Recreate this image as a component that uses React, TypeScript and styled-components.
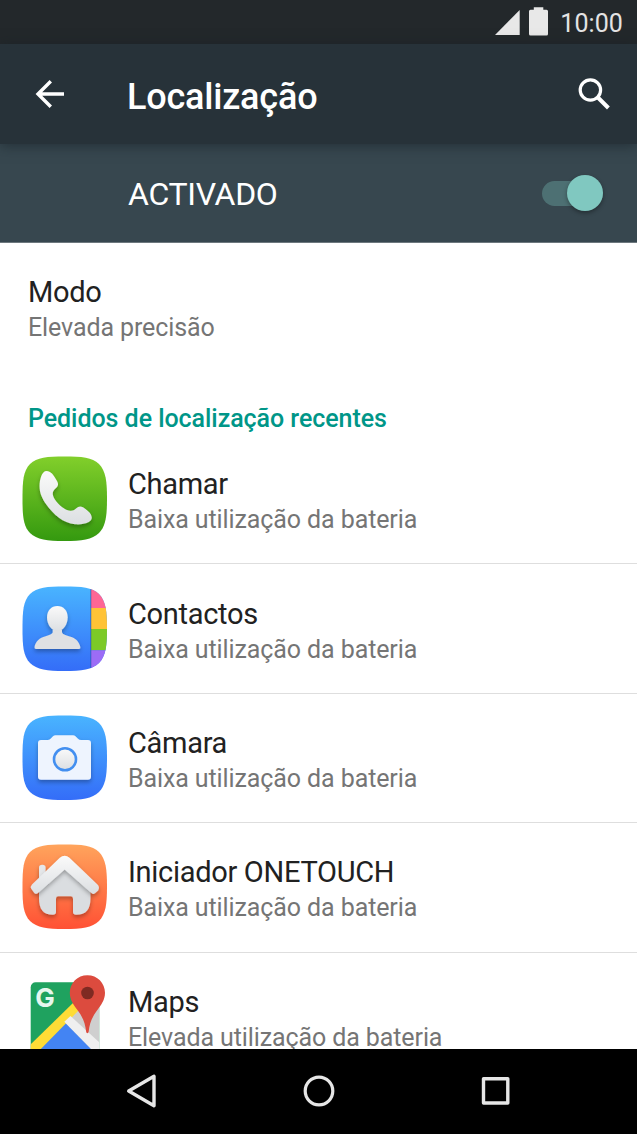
import React from 'react'
import styled, { createGlobalStyle } from 'styled-components'

const GlobalStyle = createGlobalStyle`
  * {
    box-sizing: border-box;
  }

  body {
    margin: 0;
    font-family: Roboto, 'Liberation Sans', sans-serif;
  }

  svg {
    display: block;
    flex-shrink: 0;
  }
`

const Tela = styled.div`
  display: flex;
  flex-direction: column;
  width: 637px;
  height: 1134px;
  overflow: hidden;
  background: #fff;
`

const BarraEstado = styled.div`
  display: flex;
  justify-content: flex-end;
  align-items: center;
  height: 44px;
  padding-right: 14px;
  background: #23282b;
`

const Hora = styled.span`
  margin-left: 11px;
  padding-top: 3px;
  font-size: 25px;
  line-height: 30px;
  letter-spacing: 0.1px;
  color: #e3e3e3;
`

const BarraTitulo = styled.header`
  display: flex;
  align-items: center;
  height: 100px;
  padding: 0 22px 0 28px;
  background: #273239;
  z-index: 1;
  box-shadow: 0 2px 12px rgba(20, 30, 36, 0.55);
`

const Titulo = styled.h1`
  flex: 1;
  margin: 0 0 0 56px;
  padding-top: 5px;
  font-size: 36px;
  font-weight: 500;
  line-height: 42px;
  letter-spacing: -0.2px;
  color: #fff;
`

const BarraActivado = styled.div`
  display: flex;
  align-items: center;
  justify-content: space-between;
  height: 99px;
  padding: 0 34px 0 128px;
  background: #37474f;
  border-bottom: 1px solid #6d787e;
`

const Activado = styled.span`
  padding-top: 2px;
  font-size: 32px;
  line-height: 38px;
  letter-spacing: -0.3px;
  color: #fff;
`

const Interruptor = styled.div`
  display: flex;
  align-items: center;
  justify-content: flex-end;
  width: 61px;
  height: 25px;
  border-radius: 13px;
  background: #4d7073;
`

const Botao = styled.div`
  width: 36px;
  height: 36px;
  border-radius: 50%;
  background: #80c8c0;
  box-shadow: 0 2px 4px rgba(0, 0, 0, 0.35);
`

const Conteudo = styled.main`
  flex: 1;
  min-height: 0;
  overflow: hidden;
`

const Modo = styled.section`
  height: 135px;
  padding: 31px 28px 0;
`

const Nome = styled.div`
  font-size: 29px;
  line-height: 36px;
  letter-spacing: -0.3px;
  color: #212121;
`

const Detalhe = styled.div`
  font-size: 25px;
  line-height: 36px;
  letter-spacing: -0.1px;
  color: #757575;
`

const Subtitulo = styled.h2`
  height: 57px;
  margin: 0;
  padding: 25px 28px 0;
  font-size: 25px;
  font-weight: 500;
  line-height: 32px;
  letter-spacing: -0.05px;
  color: #009688;
`

const Lista = styled.ul`
  margin: 0;
  padding: 0;
  list-style: none;
`

const Item = styled.li`
  display: flex;
  align-items: center;
  gap: 20px;
  height: 129.4px;
  padding-left: 22px;
  border-bottom: 1px solid #dedede;
`

const Texto = styled.div`
  padding-top: 6px;
`

const BarraNavegacao = styled.nav`
  display: flex;
  justify-content: space-between;
  align-items: center;
  height: 85px;
  padding: 0 123px 1px;
  background: #000;
`

const FORMA =
  'M42.5 .5C60 .5 70 1.2 77 8C83.8 15 85 25 85 42.5C85 60 83.8 70 77 77C70 83.8 60 85 42.5 85C25 85 15 83.8 8 77C1.2 70 .5 60 .5 42.5C.5 25 1.2 15 8 8C15 1.2 25 .5 42.5 .5Z'

type FundoProps = { id: string; de: string; ate: string; children: React.ReactNode }

const Fundo = ({ id, de, ate, children }: FundoProps) => (
  <svg width="86" height="86" viewBox="0 0 86 86">
    <defs>
      <linearGradient id={id} x1="0" y1="0" x2="0" y2="1">
        <stop offset="0" stopColor={de} />
        <stop offset="1" stopColor={ate} />
      </linearGradient>
      <linearGradient id={`${id}-claro`} x1="0" y1="0" x2="0" y2="1">
        <stop offset="0" stopColor="#fafafa" />
        <stop offset="1" stopColor="#dcdfe2" />
      </linearGradient>
      <clipPath id={`${id}-forma`}>
        <path d={FORMA} />
      </clipPath>
      <filter id={`${id}-sombra`} x="-20%" y="-20%" width="140%" height="150%">
        <feDropShadow dx="0" dy="2.5" stdDeviation="2" floodColor="#000" floodOpacity="0.3" />
      </filter>
    </defs>
    <path d={FORMA} fill={`url(#${id})`} />
    {children}
  </svg>
)

const IconeChamar = () => (
  <Fundo id="chamar" de="#82cf2b" ate="#34990f">
    <path
      d="M24.7 15C22 15 20.5 17 19.3 20C15.5 31 18 40 24.7 49C31.5 58.5 41 67 53 68.3C58 68.8 62.5 68 66.3 66.3C69.5 64.7 70.5 62.5 69.3 59.5C68.5 57 66.5 55 61.5 51.5C58.5 49.8 56.5 50 54 52.5C51.5 55 48.5 55.3 45 54C38.5 51 32.5 44.5 31 39.5C30.4 36.5 31 35 33.5 32.5C36.3 30 36.8 28 35 25C31.5 18.5 28.5 15 24.7 15Z"
      fill="url(#chamar-claro)"
      filter="url(#chamar-sombra)"
    />
  </Fundo>
)

const IconeContactos = () => (
  <Fundo id="contactos" de="#49b4ff" ate="#346df8">
    <g clipPath="url(#contactos-forma)">
      <rect x="69" y="0" width="17" height="22" fill="#fe6695" />
      <rect x="69" y="22" width="17" height="21" fill="#ffc336" />
      <rect x="69" y="43" width="17" height="21.3" fill="#7cca27" />
      <rect x="69" y="64.3" width="17" height="22" fill="#9c6cf6" />
      <rect x="68" y="0" width="1.5" height="86" fill="#2a4d9c" opacity="0.4" />
    </g>
    <g filter="url(#contactos-sombra)">
      <path
        d="M30.7 44L30.7 46.5C29.5 49 25.5 49.3 21.3 51C16 53 13 57 12.5 61.3Q12.4 63 14 63H57Q58.7 63 58.4 61.3C57.5 56.5 54.5 53 49.5 51C45 49.3 41 49 40 46.5V44Z"
        fill="#dfe0e3"
      />
      <path d="M35.4 20C41.5 20 45.7 24.7 45.7 31.5C45.7 38.5 41 45.2 35.4 45.2C29.8 45.2 25 38.5 25 31.5C25 24.7 29.3 20 35.4 20Z" fill="url(#contactos-claro)" />
    </g>
  </Fundo>
)

const IconeCamara = () => (
  <Fundo id="camara" de="#49b4ff" ate="#346df8">
    <path
      d="M19 25H25.5Q27.3 25 28.5 23.8L31 21.3Q32 20.3 33.5 20.3H51Q52.5 20.3 53.5 21.3L56 23.8Q57.2 25 59 25H66Q69 25 69 28V61.7Q69 64.7 66 64.7H19Q16 64.7 16 61.7V28Q16 25 19 25Z"
      fill="#eef4fe"
      filter="url(#camara-sombra)"
    />
    <circle cx="43" cy="44.3" r="11" fill="url(#camara-claro)" stroke="#438ff0" strokeWidth="2.6" />
  </Fundo>
)

const IconeInicio = () => (
  <Fundo id="inicio" de="#ffa45c" ate="#ff5134">
    <g filter="url(#inicio-sombra)">
      <path d="M17 39V23.5Q17 20.8 20.3 20.8Q23.6 20.8 23.6 23.5V34Z" fill="#e5e7e9" />
      <path
        d="M17 45L42.7 21L68.5 45V54C68.5 65 64.5 70.8 54 70.8Q51 70.8 51 68V54.5Q51 52.2 48.7 52.2H36.3Q34 52.2 34 54.5V68Q34 70.8 31 70.8C21 70.8 17 65 17 54Z"
        fill="#dadde0"
      />
    </g>
    <path
      d="M42.7 11.8Q45.3 11.8 47.5 13.8L75.5 40.5Q78 43 76.2 46.5L73 49.3Q71.2 50.7 69.4 49L42.7 25.5L16 49Q14 50.7 12.3 49L9.2 44.8Q8 42.5 10 40.5L37.8 13.8Q40 11.8 42.7 11.8Z"
      fill="url(#inicio-claro)"
      filter="url(#inicio-sombra)"
    />
  </Fundo>
)

const IconeMaps = () => (
  <svg width="86" height="86" viewBox="0 0 86 86">
    <defs>
      <clipPath id="mapa">
        <rect x="8.7" y="8.3" width="68.5" height="72" rx="5" />
      </clipPath>
    </defs>
    <g clipPath="url(#mapa)">
      <rect x="8" y="8" width="70" height="73" fill="#1fa25f" />
      <path d="M42.3 47.7L78 12V86H30Z" fill="#cfcfcf" />
      <path d="M42.3 47.7L78 84V87H5Z" fill="#4384f3" />
      <path d="M3 76L52 28L59 34L12 82Z" fill="#fedc36" />
      <path d="M42.3 47.7L48.5 42L78 69V84Z" fill="#efefef" />
    </g>
    <text x="13.2" y="33" fontFamily="Inter, sans-serif" fontSize="26" fontWeight="700" fill="#e6f7ee">
      G
    </text>
    <path d="M65.4 1.2C75.3 1.2 83 9 83 18.7C83 26 79 31 75 36.5C69.5 44 67.5 50 66.7 57.5Q66.5 59.3 65.4 59.3Q64.3 59.3 64.1 57.5C63.3 50 61.3 44 55.8 36.5C51.8 31 47.8 26 47.8 18.7C47.8 9 55.5 1.2 65.4 1.2Z" fill="#dc4b3e" />
    <circle cx="65.5" cy="19" r="6.3" fill="#7f2a22" />
  </svg>
)

const apps = [
  { nome: 'Chamar', detalhe: 'Baixa utilização da bateria', Icone: IconeChamar },
  { nome: 'Contactos', detalhe: 'Baixa utilização da bateria', Icone: IconeContactos },
  { nome: 'Câmara', detalhe: 'Baixa utilização da bateria', Icone: IconeCamara },
  { nome: 'Iniciador ONETOUCH', detalhe: 'Baixa utilização da bateria', Icone: IconeInicio },
  { nome: 'Maps', detalhe: 'Elevada utilização da bateria', Icone: IconeMaps }
]

const App = () => (
  <>
    <GlobalStyle />
    <Tela>
      <BarraEstado>
        <svg width="54" height="44" viewBox="495 0 54 44" fill="#e8e8e8">
          <path d="M495 35L519.7 10V35Z" />
          <path d="M533.8 7.3H543.3V9.7H546.5Q548 9.7 548 11.2V34Q548 35.5 546.5 35.5H530.5Q529 35.5 529 34V11.2Q529 9.7 530.5 9.7H533.8Z" />
        </svg>
        <Hora>10:00</Hora>
      </BarraEstado>
      <BarraTitulo>
        <svg width="43" height="43" viewBox="0 0 43 43" fill="none" stroke="#fff" strokeWidth="3.4">
          <path d="M36 21H10M22.8 8.3L10 21L22.8 33.8" />
        </svg>
        <Titulo>Localização</Titulo>
        <svg width="43" height="43" viewBox="0 0 43 43" fill="none" stroke="#fff">
          <circle cx="18.4" cy="17" r="10.2" strokeWidth="3.2" />
          <path d="M25.4 24L36.4 35" strokeWidth="4" />
        </svg>
      </BarraTitulo>
      <BarraActivado>
        <Activado>ACTIVADO</Activado>
        <Interruptor>
          <Botao />
        </Interruptor>
      </BarraActivado>
      <Conteudo>
        <Modo>
          <Nome>Modo</Nome>
          <Detalhe>Elevada precisão</Detalhe>
        </Modo>
        <Subtitulo>Pedidos de localização recentes</Subtitulo>
        <Lista>
          {apps.map(({ nome, detalhe, Icone }) => (
            <Item key={nome}>
              <Icone />
              <Texto>
                <Nome>{nome}</Nome>
                <Detalhe>{detalhe}</Detalhe>
              </Texto>
            </Item>
          ))}
        </Lista>
      </Conteudo>
      <BarraNavegacao>
        <svg width="36" height="36" viewBox="0 0 36 36" fill="none" stroke="#e6e6e6" strokeWidth="3.4" strokeLinejoin="round">
          <path d="M5.7 18L31 3.3V32.7Z" />
        </svg>
        <svg width="36" height="36" viewBox="0 0 36 36" fill="none" stroke="#e6e6e6" strokeWidth="3.2">
          <circle cx="18" cy="18" r="13.8" />
        </svg>
        <svg width="36" height="36" viewBox="0 0 36 36" fill="none" stroke="#e6e6e6" strokeWidth="3.4" strokeLinejoin="round">
          <path d="M5.5 5.7H29.8V30H5.5Z" />
        </svg>
      </BarraNavegacao>
    </Tela>
  </>
)

export default App
